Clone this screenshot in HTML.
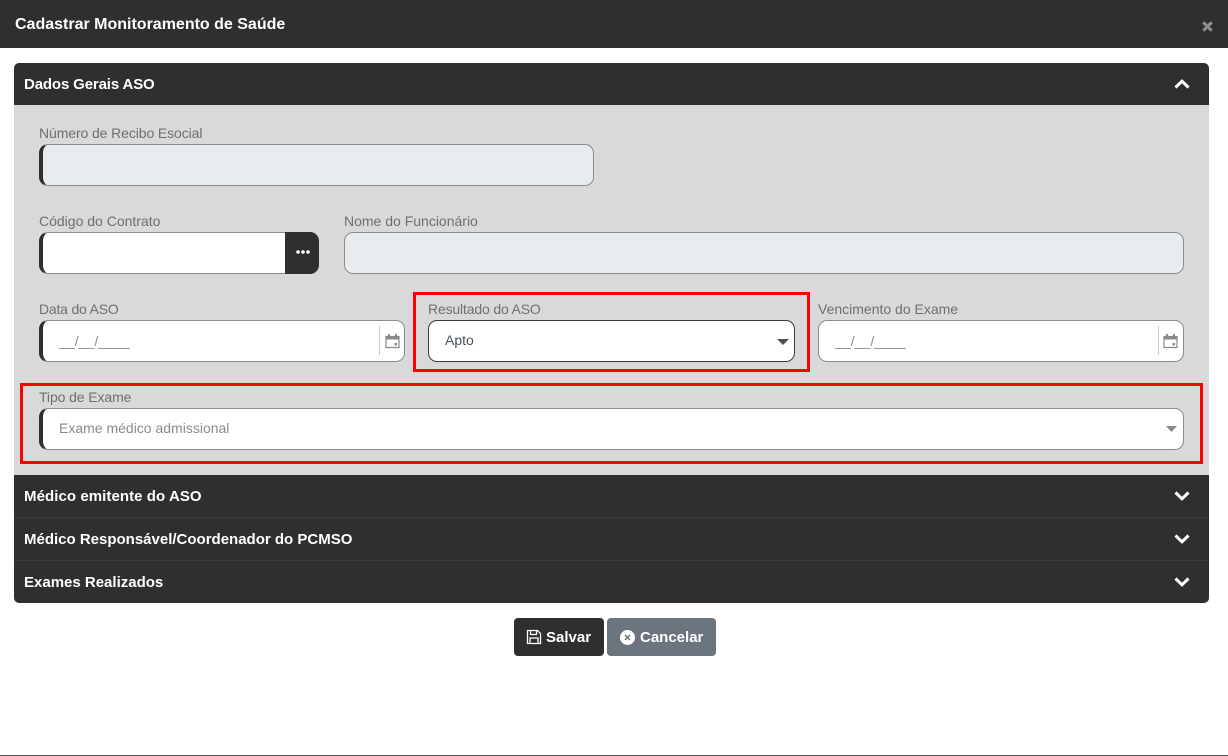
<!DOCTYPE html>
<html lang="pt-BR">
<head>
<meta charset="utf-8">
<title>Cadastrar Monitoramento de Saúde</title>
<style>
html,body{margin:0;padding:0;background:#fff}
#p{position:relative;width:1228px;height:756px;overflow:hidden;background:#fff;font-family:"Liberation Sans",sans-serif}
#p div,#p svg{position:absolute;box-sizing:border-box}
.t{white-space:nowrap;line-height:18px;height:18px}
.h{color:#fff;font-weight:700;font-size:15px}
.bar{background:#2f2f2f;left:14px;width:1195px}
.l{color:#6f6f6f;font-size:14px}
.i{height:42px;border:1px solid #8c8c8c;border-radius:9px;background:#fff}
.g{background:#e9ecef}
.a{border-left:4px solid #2f2f2f}
.red{border:3px solid #f00}
.m{color:#8a8a8a;font-size:14px}
</style>
</head>
<body>
<div id="p">
  <div style="left:0;top:0;width:1228px;height:48px;background:#2f2f2f"></div>
  <div class="t h" style="left:15px;top:16px;font-size:16px">Cadastrar Monitoramento de Saúde</div>
  <svg style="left:1201px;top:20px" width="13" height="13" viewBox="0 0 13 13"><path d="M2.300 2.300l8.400 8.400M10.700 2.300l-8.400 8.400" stroke="#8f8f8f" stroke-width="3"/></svg>

  <div class="bar" style="top:63px;height:42px;border-radius:5px 5px 0 0"></div>
  <div class="t h" style="left:24px;top:76px;letter-spacing:-.14px">Dados Gerais ASO</div>
  <svg style="left:1174px;top:78px" width="16" height="12" viewBox="0 0 16 12"><path d="M1.500 9.500L8 3.200l6.500 6.300" fill="none" stroke="#fff" stroke-width="3"/></svg>
  <div style="left:14px;top:105px;width:1195px;height:370px;background:#d9d9d9"></div>

  <div class="t l" style="left:39px;top:124px;letter-spacing:-.1px">Número de Recibo Esocial</div>
  <div class="i g a" style="left:39px;top:144px;width:555px"></div>

  <div class="t l" style="left:39px;top:212px">Código do Contrato</div>
  <div class="i a" style="left:39px;top:232px;width:250px;border-radius:9px 0 0 9px"></div>
  <div style="left:285px;top:232px;width:34px;height:42px;background:#2f2f2f;border-radius:0 9px 9px 0"></div>
  <svg style="left:295px;top:249px" width="16" height="6" viewBox="0 0 16 6"><circle cx="3" cy="3" r="1.800" fill="#fff"/><circle cx="8" cy="3" r="1.800" fill="#fff"/><circle cx="13" cy="3" r="1.800" fill="#fff"/></svg>

  <div class="t l" style="left:344px;top:212px">Nome do Funcionário</div>
  <div class="i g" style="left:344px;top:232px;width:840px"></div>

  <div class="t l" style="left:39px;top:300px;letter-spacing:-.2px">Data do ASO</div>
  <div class="i a" style="left:39px;top:320px;width:366px"></div>
  <div class="t m" style="left:59px;top:332px;letter-spacing:.06px">__/__/____</div>
  <div style="left:379px;top:326px;width:1px;height:29px;background:#c9c9c9"></div>
  <svg style="left:385px;top:333px" width="15" height="16" viewBox="0 0 15 16"><path d="M1 3.500h13v11H1z" fill="none" stroke="#8a8a8a" stroke-width="1.200"/><path d="M1 3h13v3.500H1zM3 1h2v3H3zM10 1h2v3h-2zM9.500 10h2.500v2.500H9.500z" fill="#8a8a8a"/></svg>

  <div class="red" style="left:413px;top:292px;width:397px;height:80px"></div>
  <div class="t l" style="left:428px;top:300px;letter-spacing:-.16px">Resultado do ASO</div>
  <div class="i" style="left:428px;top:320px;width:367px;border-color:#3a3a3a"></div>
  <div class="t" style="left:445px;top:331px;color:#495057;font-size:14px">Apto</div>
  <svg style="left:777px;top:339px" width="12" height="6" viewBox="0 0 12 6"><path d="M0 0h12L6 6z" fill="#4a4f57"/></svg>

  <div class="t l" style="left:818px;top:300px">Vencimento do Exame</div>
  <div class="i" style="left:818px;top:320px;width:366px"></div>
  <div class="t m" style="left:835px;top:332px;letter-spacing:.06px">__/__/____</div>
  <div style="left:1158px;top:326px;width:1px;height:29px;background:#c9c9c9"></div>
  <svg style="left:1163px;top:333px" width="15" height="16" viewBox="0 0 15 16"><path d="M1 3.500h13v11H1z" fill="none" stroke="#8a8a8a" stroke-width="1.200"/><path d="M1 3h13v3.500H1zM3 1h2v3H3zM10 1h2v3h-2zM9.500 10h2.500v2.500H9.500z" fill="#8a8a8a"/></svg>

  <div class="red" style="left:20px;top:383px;width:1183px;height:81px"></div>
  <div class="t l" style="left:39px;top:388px;letter-spacing:-.1px">Tipo de Exame</div>
  <div class="i a" style="left:39px;top:408px;width:1145px"></div>
  <div class="t m" style="left:59px;top:419px">Exame médico admissional</div>
  <svg style="left:1166px;top:426px" width="11" height="6" viewBox="0 0 11 6"><path d="M0 0h11L5.500 6z" fill="#8a8a8a"/></svg>

  <div class="bar" style="top:475px;height:128px;border-radius:0 0 5px 5px"></div>
  <div style="left:14px;top:517px;width:1195px;height:1px;background:#3a3a3a"></div>
  <div style="left:14px;top:560px;width:1195px;height:1px;background:#3a3a3a"></div>
  <div class="t h" style="left:24px;top:488px;letter-spacing:.07px">Médico emitente do ASO</div>
  <div class="t h" style="left:24px;top:531px">Médico Responsável/Coordenador do PCMSO</div>
  <div class="t h" style="left:24px;top:574px">Exames Realizados</div>
  <svg style="left:1174px;top:490px" width="16" height="12" viewBox="0 0 16 12"><path d="M1.500 2.500L8 8.800l6.500-6.300" fill="none" stroke="#fff" stroke-width="3"/></svg>
  <svg style="left:1174px;top:533px" width="16" height="12" viewBox="0 0 16 12"><path d="M1.500 2.500L8 8.800l6.500-6.300" fill="none" stroke="#fff" stroke-width="3"/></svg>
  <svg style="left:1174px;top:576px" width="16" height="12" viewBox="0 0 16 12"><path d="M1.500 2.500L8 8.800l6.500-6.300" fill="none" stroke="#fff" stroke-width="3"/></svg>

  <div style="left:514px;top:618px;width:90px;height:38px;background:#2f2f2f;border-radius:4px"></div>
  <svg style="left:526px;top:629px" width="16" height="16" viewBox="0 0 16 16"><path d="M1.500 1.500h10l3 3v10h-13z" fill="none" stroke="#fff" stroke-width="1.300"/><path d="M4.500 1.500v4h6v-4M4 14.500V9h8v5.500" fill="none" stroke="#fff" stroke-width="1.300"/></svg>
  <div class="t" style="left:546px;top:629px;color:#fff;font-weight:700;font-size:15px">Salvar</div>
  <div style="left:607px;top:618px;width:109px;height:38px;background:#6c757d;border-radius:4px"></div>
  <svg style="left:620px;top:630px" width="15" height="15" viewBox="0 0 15 15"><circle cx="7.500" cy="7.500" r="7.500" fill="#fff"/><path d="M5 5l5 5M10 5l-5 5" stroke="#6c757d" stroke-width="1.500"/></svg>
  <div class="t" style="left:640px;top:629px;color:#fff;font-weight:700;font-size:15px">Cancelar</div>

  <div style="left:0;top:755px;width:1228px;height:1px;background:#555"></div>
</div>
</body>
</html>
